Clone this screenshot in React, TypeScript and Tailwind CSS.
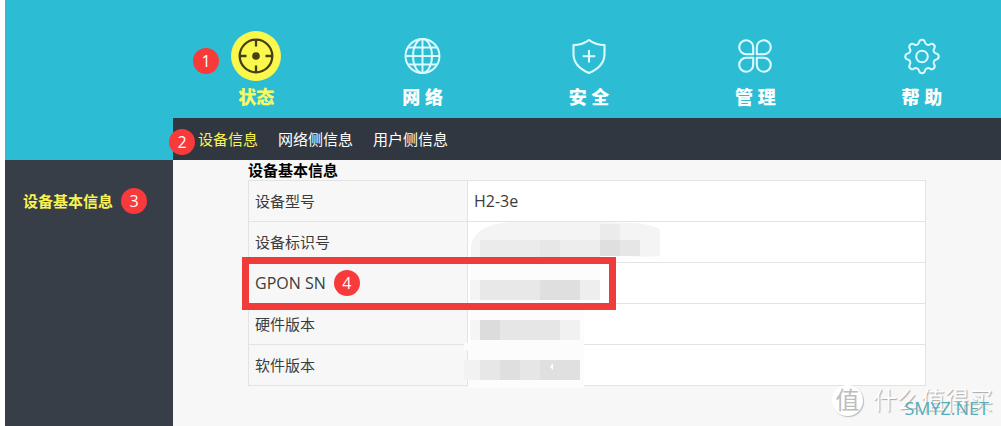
import React from "react";

function StatusIcon() {
  return (
    <svg viewBox="0 0 50 50" className="size-[50px]" fill="none" stroke="#453f12" aria-hidden="true">
      <circle cx="25" cy="25" r="25" fill="#fbf84d" stroke="none" />
      <circle cx="25" cy="25" r="16.3" strokeWidth="2.3" />
      <path d="M25 8v7.500M25 34.500V42M8 25h7.500M34.500 25H42" strokeWidth="2.300" />
      <circle cx="25" cy="25" r="3.800" fill="#453f12" stroke="none" />
    </svg>
  );
}

function NetworkIcon() {
  return (
    <svg viewBox="0 0 50 50" className="size-[50px]" fill="none" stroke="#dcfcff" strokeWidth="1.9" aria-hidden="true">
      <circle cx="24.500" cy="25" r="17" />
      <ellipse cx="24.500" cy="25" rx="9.500" ry="17" />
      <path d="M24.500 8v34M7.500 25h34M10 16.500h29M10 33.500h29" />
    </svg>
  );
}

function SecurityIcon() {
  return (
    <svg viewBox="0 0 50 50" className="size-[50px]" fill="none" stroke="#dcfcff" strokeWidth="2.1" strokeLinejoin="round" aria-hidden="true">
      <path d="M25 9C20.500 12.500 15.500 14 9.500 14V23C9.500 32.500 15.500 38 25 42C34.500 38 40.500 32.500 40.500 23V14C34.500 14 29.500 12.500 25 9Z" />
      <path d="M25 19v12.500M18.700 25.300h12.600" />
    </svg>
  );
}

function ManageIcon() {
  return (
    <svg viewBox="0 0 50 50" className="size-[50px]" fill="none" stroke="#dcfcff" strokeWidth="2.1" strokeLinejoin="round" aria-hidden="true">
      <path d="M23.200 23.200H16.500A7 7 0 1 1 23.200 16.500Z" />
      <path d="M26.800 23.200H33.500A7 7 0 1 0 26.800 16.500Z" />
      <path d="M23.200 26.800H16.500A7 7 0 1 0 23.200 33.500Z" />
      <path d="M26.800 26.800H33.500A7 7 0 1 1 26.800 33.500Z" />
    </svg>
  );
}

function HelpIcon() {
  return (
    <svg viewBox="0 0 50 50" className="size-[50px]" fill="none" stroke="#dcfcff" strokeWidth="2" strokeLinejoin="round" aria-hidden="true">
      <circle cx="25" cy="25.500" r="5.800" />
      <path d="M22.100 11A3 3 0 0 1 27.900 11A3.300 3.300 0 0 0 33.200 13.200A3 3 0 0 1 37.300 17.300A3.300 3.300 0 0 0 39.500 22.600A3 3 0 0 1 39.500 28.400A3.300 3.300 0 0 0 37.300 33.700A3 3 0 0 1 33.200 37.800A3.300 3.300 0 0 0 27.900 40A3 3 0 0 1 22.100 40A3.300 3.300 0 0 0 16.800 37.800A3 3 0 0 1 12.700 33.700A3.300 3.300 0 0 0 10.500 28.400A3 3 0 0 1 10.500 22.600A3.300 3.300 0 0 0 12.700 17.300A3 3 0 0 1 16.800 13.200A3.300 3.300 0 0 0 22.100 11Z" />
    </svg>
  );
}

function Marker({ n }: { n: number }) {
  return (
    <span className="flex size-[26px] shrink-0 items-center justify-center rounded-full bg-[#f83a3b] text-base leading-none text-white">
      {n}
    </span>
  );
}

const sections = [
  { label: "状态", Icon: StatusIcon, active: true },
  { label: "网 络", Icon: NetworkIcon },
  { label: "安 全", Icon: SecurityIcon },
  { label: "管 理", Icon: ManageIcon },
  { label: "帮 助", Icon: HelpIcon },
];

const rows = [
  { label: "设备型号", value: "H2-3e" },
  { label: "设备标识号" },
  { label: "GPON SN", latin: true, marker: 4 },
  { label: "硬件版本" },
  { label: "软件版本" },
];

const blocks: [number, number, number, number, string][] = [
  [16, 22, 60, 17, "#ebebeb"],
  [76, 22, 20, 17, "#e7e7e7"],
  [96, 22, 40, 17, "#ededed"],
  [136, 6, 20, 16, "#ebebeb"],
  [136, 22, 20, 16, "#dfdfdf"],
  [156, 22, 20, 16, "#e6e6e6"],
  [6, 62, 10, 20, "#f4f4f4"],
  [16, 62, 60, 20, "#e8e8e8"],
  [76, 62, 40, 20, "#dfdfdf"],
  [116, 62, 20, 20, "#eeeeee"],
  [6, 102, 10, 20, "#f5f5f5"],
  [16, 102, 20, 20, "#dcdcdc"],
  [36, 102, 60, 20, "#e6e6e6"],
  [96, 102, 20, 20, "#f1f1f1"],
  [0, 142, 16, 20, "#f2f2f2"],
  [16, 142, 20, 20, "#e7e7e7"],
  [36, 142, 20, 20, "#dfdfdf"],
  [56, 142, 20, 20, "#e6e6e6"],
  [76, 142, 40, 20, "#e0e0e0"],
];

function MaskedValues() {
  return (
    <svg viewBox="0 0 200 172" className="pointer-events-none absolute left-[216px] top-[58px] h-[172px] w-[200px]" aria-hidden="true">
      <path d="M7 39V27Q12 5 50 4H136L170 5Q192 7 196 12V38Q176 40 150 37L126 39Z" fill="#f4f4f4" />
      <path d="M7 46H136V92H120V170H4V132H0V125H7Z" fill="#fcfcfc" />
      {blocks.map(([x, y, w, h, c]) => (
        <rect key={`${x}-${y}`} x={x} y={y} width={w} height={h} fill={c} />
      ))}
      <path d="M89 145l-3 4 3 3Z" fill="#fff" />
    </svg>
  );
}

export default function App() {
  return (
    <div className="relative flex min-h-screen overflow-hidden bg-white pl-[5px] font-['Open_Sans','Noto_Sans_CJK_SC',sans-serif] text-[15px] leading-5">
      <aside className="flex w-[168px] shrink-0 flex-col bg-[#373e48]">
        <div className="h-40 bg-[#2cbdd5]" />
        <div className="flex items-center gap-2 py-7 pl-[18px]">
          <a href="#basic" className="font-bold text-[#f8f252]">设备基本信息</a>
          <Marker n={3} />
        </div>
      </aside>

      <div className="flex min-w-0 flex-1 flex-col bg-[#f7f7f7]">
        <header className="relative h-[118px] bg-[#2cbdd5] pt-[31px]">
          <nav className="-mr-1 flex">
            {sections.map(({ label, Icon, active }) => (
              <a
                key={label}
                href="#section"
                className={`flex flex-1 flex-col items-center gap-1 text-lg leading-6 font-black ${active ? "text-[#f6fb62]" : "text-white"}`}
              >
                <Icon />
                <span>{label}</span>
              </a>
            ))}
          </nav>
          <div className="absolute left-5 top-12">
            <Marker n={1} />
          </div>
        </header>

        <nav className="relative flex h-[42px] items-center gap-5 bg-[#303741] pl-[25px] text-white">
          <a href="#device" className="text-[#f8f252]">设备信息</a>
          <a href="#network-side">网络侧信息</a>
          <a href="#user-side">用户侧信息</a>
          <div className="absolute -left-1 top-[11px]">
            <Marker n={2} />
          </div>
        </nav>

        <main className="relative mr-[75px] ml-[75px]">
          <table className="w-full table-fixed border-collapse text-left text-[#3c3c3c]">
            <caption className="text-left font-bold text-black">设备基本信息</caption>
            <tbody>
              {rows.map(({ label, value, latin, marker }) => (
                <tr key={label} className="h-[41px] border border-[#e3e3e3]">
                  <th scope="row" className="w-[219px] border-r border-[#e3e3e3] px-1.5 font-normal">
                    <div className={`flex items-center gap-2 ${latin ? "text-base leading-5" : ""}`}>
                      {label}
                      {marker && <Marker n={marker} />}
                    </div>
                  </th>
                  <td className="bg-white px-1.5 text-base leading-5">{value}</td>
                </tr>
              ))}
            </tbody>
          </table>
          <MaskedValues />
          <div className="pointer-events-none absolute -left-1.5 top-[97px] h-[53px] w-[374px] border-[7px] border-[#ef3b3a]" />
        </main>
      </div>

      <div className="absolute right-2 bottom-2 flex items-center gap-2.5 text-2xl">
        <span className="flex size-[31px] items-center justify-center rounded-full bg-white text-[#bdbdbd] shadow-[1px_1px_1px_#bbbbbb]">值</span>
        <span className="leading-9 text-[#fdfdfd] [text-shadow:1px_1px_1px_#a8a8a8]">什么值得买</span>
      </div>
      <span className="absolute right-3 bottom-2 text-lg leading-5 text-[#55aeb9]">SMYZ.NET</span>
    </div>
  );
}
